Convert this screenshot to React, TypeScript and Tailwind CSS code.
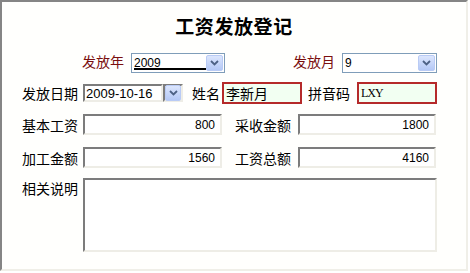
import type { ReactNode } from "react";

const cjk = "font-['Noto_Sans_CJK_SC','Noto_Sans',sans-serif]";
const num = "font-['Liberation_Sans',Arial,sans-serif]";

function Chevron() {
  return (
    <svg width="9" height="6" viewBox="0 0 9 6">
      <path d="M1 1 L4.5 4.5 L8 1" fill="none" stroke="#4d6185" strokeWidth="1.8" />
    </svg>
  );
}

function ArrowButton() {
  return (
    <div className="flex h-[16px] w-[17px] items-center justify-center rounded-[2px] border border-[#b9cbf5] bg-gradient-to-b from-[#dce6fd] to-[#b4c8f6]">
      <Chevron />
    </div>
  );
}

function Label({ children, className = "" }: { children: ReactNode; className?: string }) {
  return <span className={`${cjk} text-[14px] leading-none text-black ${className}`}>{children}</span>;
}

function Inset({ className = "", children }: { className?: string; children?: ReactNode }) {
  return (
    <div
      className={`flex items-center border-2 border-t-[#7c7c7c] border-l-[#7c7c7c] border-r-[#eeede6] border-b-[#eeede6] bg-white ${className}`}
    >
      {children}
    </div>
  );
}

function NumberBox({ value, width }: { value: string; width: string }) {
  return (
    <Inset className={`h-[21px] ${width} justify-end pr-[5px]`}>
      <span className={`${num} text-[12px] leading-none`}>{value}</span>
    </Inset>
  );
}

function RedBox({ children }: { children: ReactNode }) {
  return (
    <div className="flex h-[22px] w-[80px] items-center border-2 border-[#b52a2a] bg-[#f2fff2] pl-[2px]">
      {children}
    </div>
  );
}

function Select({ value, width, underline }: { value: string; width: string; underline?: boolean }) {
  return (
    <div className={`flex h-[20px] ${width} items-center border border-[#7f9db9] bg-white pl-[2px] pr-[1px]`}>
      <div className="relative flex h-full flex-1 items-center">
        <span className={`${num} text-[12px] leading-none`}>{value}</span>
        {underline && <div className="absolute bottom-[2px] left-0 h-[2px] w-[72px] bg-black" />}
      </div>
      <ArrowButton />
    </div>
  );
}

export default function App() {
  return (
    <div className="h-[273px] w-[470px] overflow-hidden bg-white">
      <div className="flex h-[271px] w-[468px] flex-col border-2 border-t-[#858585] border-l-[#858585] border-r-[#f0efe8] border-b-[#f0efe8] bg-[#fffffd]">
        <div className="flex h-[51px] justify-center pt-[14px]">
          <span className={`${cjk} text-[19px] font-bold leading-none tracking-[0.6px] text-black`}>工资发放登记</span>
        </div>

        <div className="flex h-[20px] items-center">
          <Label className="ml-[80px] -mt-[5px] !text-[#7a0f0f]">发放年</Label>
          <div className="ml-[7px]">
            <Select value="2009" width="w-[94px]" underline />
          </div>
          <Label className="ml-[68px] -mt-[5px] !text-[#7a0f0f]">发放月</Label>
          <div className="ml-[7px]">
            <Select value="9" width="w-[95px]" />
          </div>
        </div>

        <div className="mt-[9px] flex h-[22px] items-center">
          <Label className="ml-[20px]">发放日期</Label>
          <Inset className="ml-[5px] h-[18px] w-[80px] pl-[1px]">
            <span className={`${num} text-[13px] leading-none`}>2009-10-16</span>
          </Inset>
          <Inset className="h-[18px] w-[20px] justify-center">
            <ArrowButton />
          </Inset>
          <Label className="ml-[9px]">姓名</Label>
          <div className="ml-[2px]">
            <RedBox>
              <span className={`${cjk} text-[14px] leading-none`}>李新月</span>
            </RedBox>
          </div>
          <Label className="ml-[6px]">拼音码</Label>
          <div className="ml-[7px]">
            <RedBox>
              <span className="font-['Liberation_Serif','Times_New_Roman',serif] text-[12px] leading-none tracking-[-1px]">LXY</span>
            </RedBox>
          </div>
        </div>

        <div className="mt-[10px] flex h-[21px] items-center">
          <Label className="ml-[20px]">基本工资</Label>
          <div className="ml-[5px]">
            <NumberBox value="800" width="w-[139px]" />
          </div>
          <Label className="ml-[13px]">采收金额</Label>
          <div className="ml-[7px]">
            <NumberBox value="1800" width="w-[138px]" />
          </div>
        </div>

        <div className="mt-[12px] flex h-[21px] items-center">
          <Label className="ml-[20px]">加工金额</Label>
          <div className="ml-[5px]">
            <NumberBox value="1560" width="w-[139px]" />
          </div>
          <Label className="ml-[13px]">工资总额</Label>
          <div className="ml-[7px]">
            <NumberBox value="4160" width="w-[138px]" />
          </div>
        </div>

        <div className="mt-[10px] flex items-start">
          <Label className="ml-[20px] mt-[3px]">相关说明</Label>
          <Inset className="ml-[5px] h-[74px] w-[354px]" />
        </div>
      </div>
    </div>
  );
}
